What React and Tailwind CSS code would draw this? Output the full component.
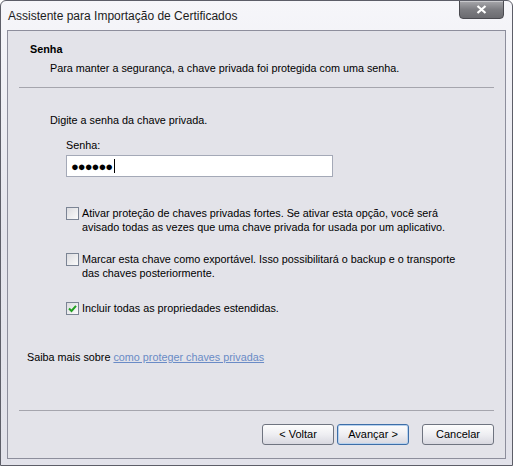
import { useState } from 'react';

function Checkbox({ checked, onChange }) {
  return (
    <button
      onClick={onChange}
      className="mt-[1px] flex h-[13px] w-[13px] shrink-0 items-center justify-center border border-[#7b8494] bg-gradient-to-br from-[#dcdce0] to-[#fbfbfb]"
    >
      {checked && (
        <svg width="9" height="9" viewBox="0 0 9 9">
          <path d="M1 4.5 L3.5 7 L8 1.8" fill="none" stroke="#21a121" strokeWidth="2" />
        </svg>
      )}
    </button>
  );
}

function WinButton({ children, isDefault }) {
  return (
    <button
      className={`h-[21px] w-[72px] rounded-[3px] border bg-gradient-to-b from-[#fdfdfd] via-[#eeeef2] to-[#d8d8e0] text-[11px] text-black ${
        isDefault ? 'border-[#3d6ea8] shadow-[inset_0_0_0_1px_#b8d2ee]' : 'border-[#6f7480]'
      }`}
    >
      {children}
    </button>
  );
}

export default function App() {
  const [opts, setOpts] = useState({ strong: false, exportable: false, extended: true });
  const toggle = (k) => setOpts({ ...opts, [k]: !opts[k] });

  return (
    <div
      className="relative h-[466px] w-[513px] overflow-hidden rounded-t-[6px] border border-[#5d5e68] bg-gradient-to-b from-[#f6f6fa] via-[#e4e4ec] to-[#e2e2ea] text-[10.8px] text-black"
      style={{ fontFamily: '"Liberation Sans", Arial, sans-serif' }}
    >
      {/* Title bar */}
      <div className="flex h-[29px] items-center pl-[7px] text-[12px] text-[#1c1c1c]">
        Assistente para Importação de Certificados
      </div>
      <button className="absolute right-[8px] top-[-1px] flex h-[19px] w-[45px] items-center justify-center rounded-b-[4px] border border-[#4a4a50] bg-gradient-to-b from-[#a8a8ac] via-[#7d7d82] to-[#6b6b70] shadow-[inset_0_1px_0_#c8c8cc]">
        <svg width="11" height="9" viewBox="0 0 11 9">
          <path d="M1.5 1 L9.5 8 M9.5 1 L1.5 8" stroke="white" strokeWidth="2.2" />
        </svg>
      </button>

      {/* Content */}
      <div className="mx-[6px] flex h-[429px] flex-col border border-[#8d8e9c] bg-[#e3e3e9]">
        {/* Header */}
        <div className="pl-[22px] pt-[10px]">
          <div className="h-[14px] font-bold">Senha</div>
          <div className="mt-[5px] h-[14px] pl-[20px]">
            Para manter a segurança, a chave privada foi protegida com uma senha.
          </div>
        </div>
        <div className="mx-[11px] mt-[13px] border-t border-[#a5a5ad]" />

        {/* Body */}
        <div className="pl-[42px] pt-[24px]">
          <div className="h-[14px]">Digite a senha da chave privada.</div>
          <div className="pl-[16px]">
            <div className="mt-[11px] h-[14px]">Senha:</div>
            <div className="mt-[4px] flex h-[22px] w-[267px] items-center border border-[#a4a9b7] bg-white pl-[4px]">
              <span className="text-[13px] font-bold leading-none tracking-[-1px]">●●●●●●</span>
              <span className="ml-[2px] h-[14px] w-[1px] bg-black" />
            </div>

            <div className="mt-[29px] flex gap-[3px] pr-[40px] leading-[14px]">
              <Checkbox checked={opts.strong} onChange={() => toggle('strong')} />
              <div>
                Ativar proteção de chaves privadas fortes. Se ativar esta opção, você será avisado todas as vezes que uma chave privada for usada por um aplicativo.
              </div>
            </div>

            <div className="mt-[18px] flex gap-[3px] pr-[40px] leading-[14px]">
              <Checkbox checked={opts.exportable} onChange={() => toggle('exportable')} />
              <div>
                Marcar esta chave como exportável. Isso possibilitará o backup e o transporte das chaves posteriormente.
              </div>
            </div>

            <div className="mt-[21px] flex gap-[3px] leading-[14px]">
              <Checkbox checked={opts.extended} onChange={() => toggle('extended')} />
              <div>Incluir todas as propriedades estendidas.</div>
            </div>
          </div>
        </div>

        <div className="pl-[19px] pt-[34px]">
          Saiba mais sobre{' '}
          <a href="#" className="text-[#6a8bc6] underline">
            como proteger chaves privadas
          </a>
        </div>

        <div className="flex-1" />
        <div className="mx-[11px] border-t border-[#a5a5ad]" />
        <div className="flex h-[47px] items-center justify-end pr-[11px] pb-[1px]">
          <WinButton>&lt; Voltar</WinButton>
          <div className="w-[3px]" />
          <WinButton isDefault>Avançar &gt;</WinButton>
          <div className="w-[13px]" />
          <WinButton>Cancelar</WinButton>
        </div>
      </div>
    </div>
  );
}
